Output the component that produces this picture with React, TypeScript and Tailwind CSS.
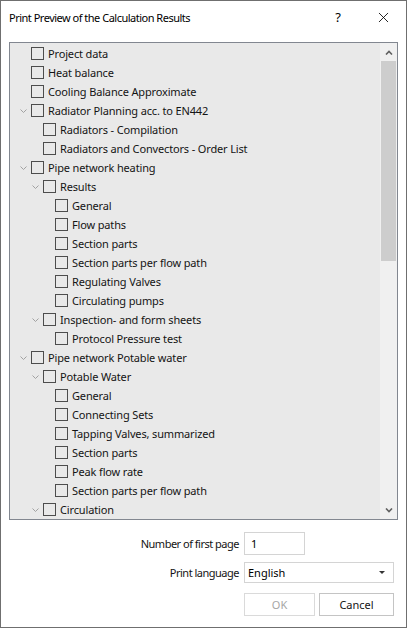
import { X } from "lucide-react";

type Row = { label: string; level: number; expandable?: boolean };

const rows: Row[] = [
  { label: "Project data", level: 0 },
  { label: "Heat balance", level: 0 },
  { label: "Cooling Balance Approximate", level: 0 },
  { label: "Radiator Planning acc. to EN442", level: 0, expandable: true },
  { label: "Radiators - Compilation", level: 1 },
  { label: "Radiators and Convectors - Order List", level: 1 },
  { label: "Pipe network heating", level: 0, expandable: true },
  { label: "Results", level: 1, expandable: true },
  { label: "General", level: 2 },
  { label: "Flow paths", level: 2 },
  { label: "Section parts", level: 2 },
  { label: "Section parts per flow path", level: 2 },
  { label: "Regulating Valves", level: 2 },
  { label: "Circulating pumps", level: 2 },
  { label: "Inspection- and form sheets", level: 1, expandable: true },
  { label: "Protocol Pressure test", level: 2 },
  { label: "Pipe network Potable water", level: 0, expandable: true },
  { label: "Potable Water", level: 1, expandable: true },
  { label: "General", level: 2 },
  { label: "Connecting Sets", level: 2 },
  { label: "Tapping Valves, summarized", level: 2 },
  { label: "Section parts", level: 2 },
  { label: "Peak flow rate", level: 2 },
  { label: "Section parts per flow path", level: 2 },
  { label: "Circulation", level: 1, expandable: true },
];

const indent = ["pl-[10px]", "pl-[22px]", "pl-[34px]"];

function TreeRow({ row }: { row: Row }) {
  return (
    <div className={`flex h-[19px] items-center ${indent[row.level]}`}>
      <span className="flex w-[11px] items-center">
        {row.expandable ? (
          <svg width="7" height="4" viewBox="0 0 7 4" className="overflow-visible">
            <polyline points="0.5,0.5 3.5,3.5 6.5,0.5" fill="none" stroke="#a2a2a2" strokeWidth="1" />
          </svg>
        ) : null}
      </span>
      <span className="h-[13px] w-[13px] shrink-0 border border-[#4d4d4d]" />
      <span className="ml-[4px] whitespace-nowrap tracking-[-0.15px] text-[#141414]">{row.label}</span>
    </div>
  );
}

export default function App() {
  return (
    <div className="flex h-[628px] w-[407px] flex-col border border-[#6f6f6f] bg-white font-['Noto_Sans',sans-serif] text-[11px] leading-none text-black">
      <div className="flex h-[41px] shrink-0 items-center pl-[8px] pb-[9px]">
        <span className="flex-1 tracking-[-0.5px]">Print Preview of the Calculation Results</span>
        <span className="mr-[34px] text-[13px]">?</span>
        <X size={17} strokeWidth={1.2} className="mr-[14px]" />
      </div>

      <div className="mx-[8px] flex h-[478px] shrink-0 border border-[#828790] bg-[#e9e9e9]">
        <div className="flex-1 overflow-hidden pt-[1px]">
          {rows.map((row, i) => (
            <TreeRow key={i} row={row} />
          ))}
        </div>
        <div className="flex w-[17px] shrink-0 flex-col bg-[#f0f0f0]">
          <div className="flex h-[18px] items-center justify-center">
            <svg width="8" height="5" viewBox="0 0 8 5">
              <polyline points="1,4.5 4,1.5 7,4.5" fill="none" stroke="#606060" strokeWidth="1.6" />
            </svg>
          </div>
          <div className="mx-[1px] h-[200px] bg-[#cdcdcd]" />
          <div className="flex-1" />
          <div className="flex h-[18px] items-center justify-center">
            <svg width="8" height="5" viewBox="0 0 8 5">
              <polyline points="1,0.5 4,3.5 7,0.5" fill="none" stroke="#606060" strokeWidth="1.6" />
            </svg>
          </div>
        </div>
      </div>

      <div className="mt-[12px] flex items-center">
        <span className="w-[238px] text-right tracking-[-0.5px] text-[#141414]">Number of first page</span>
        <div className="ml-[5px] flex h-[23px] w-[61px] items-center border border-[#d4d4d4] pl-[6px]">1</div>
      </div>

      <div className="mt-[7px] flex items-center">
        <span className="w-[238px] text-right tracking-[-0.5px] text-[#141414]">Print language</span>
        <div className="ml-[5px] flex h-[21px] w-[150px] items-center justify-between border border-[#d4d4d4] pl-[3px] pr-[8px]">
          <span>English</span>
          <svg width="6" height="3" viewBox="0 0 6 3">
            <polygon points="0,0 6,0 3,3" fill="#333" />
          </svg>
        </div>
      </div>

      <div className="mt-[10px] flex">
        <div className="ml-[243px] flex h-[23px] w-[71px] items-center justify-center border border-[#dadada] text-[#a6a6a6]">OK</div>
        <div className="ml-[4px] flex h-[23px] w-[75px] items-center justify-center border border-[#c4c4c4] text-[#141414]">Cancel</div>
      </div>
    </div>
  );
}
